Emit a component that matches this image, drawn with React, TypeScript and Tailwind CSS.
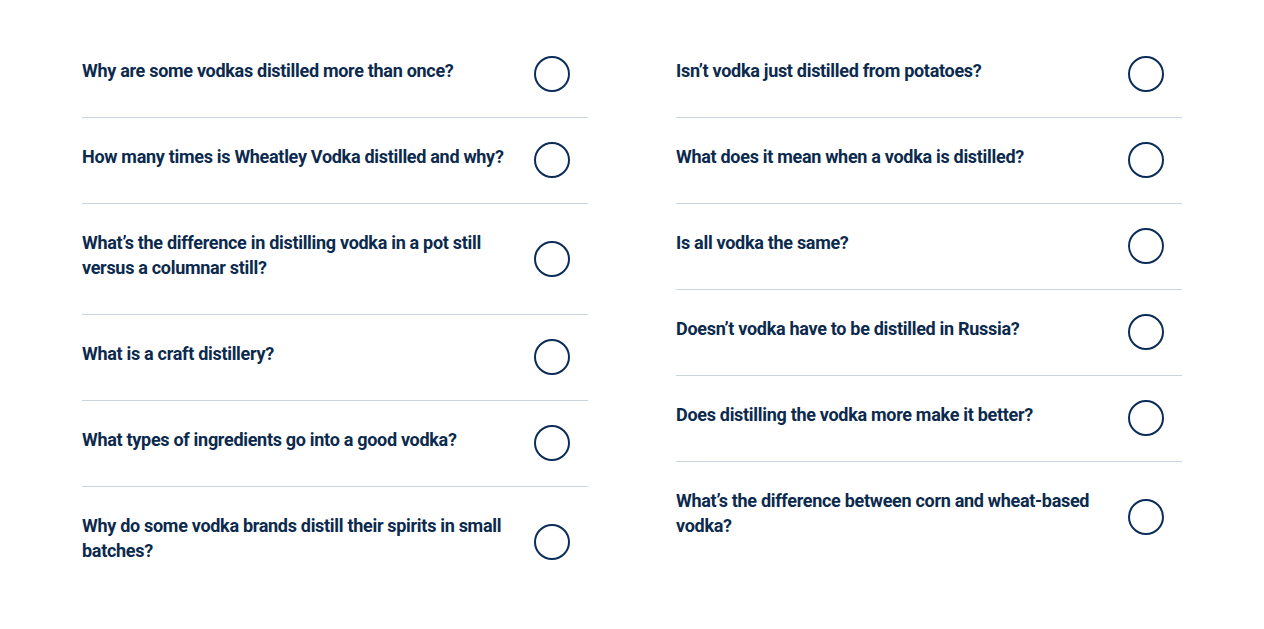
const left = [
  "Why are some vodkas distilled more than once?",
  "How many times is Wheatley Vodka distilled and why?",
  "What’s the difference in distilling vodka in a pot still versus a columnar still?",
  "What is a craft distillery?",
  "What types of ingredients go into a good vodka?",
  "Why do some vodka brands distill their spirits in small batches?",
]

const right = [
  "Isn’t vodka just distilled from potatoes?",
  "What does it mean when a vodka is distilled?",
  "Is all vodka the same?",
  "Doesn’t vodka have to be distilled in Russia?",
  "Does distilling the vodka more make it better?",
  "What’s the difference between corn and wheat-based vodka?",
]

function FaqColumn({ items }: { items: string[] }) {
  return (
    <div className="w-[506px]">
      {items.map((q, i) => (
        <div
          key={q}
          className={
            "flex items-center pt-[24px] pb-[25px] pr-[18px] " +
            (i < items.length - 1 ? "border-b border-[#c9d4df]" : "")
          }
        >
          <p className="mt-[2px] mb-[9px] w-[432px] text-[18px] font-bold leading-[25px] tracking-[-0.3px] text-[#0b2a4d]">
            {q}
          </p>
          <span className="ml-auto h-9 w-9 shrink-0 rounded-full border-2 border-[#0b2d57]" />
        </div>
      ))}
    </div>
  )
}

export default function App() {
  return (
    <div
      className="flex min-h-[629px] justify-center gap-[88px] bg-white pt-[32px]"
      style={{ fontFamily: "Roboto, 'Liberation Sans', sans-serif" }}
    >
      <FaqColumn items={left} />
      <FaqColumn items={right} />
    </div>
  )
}
